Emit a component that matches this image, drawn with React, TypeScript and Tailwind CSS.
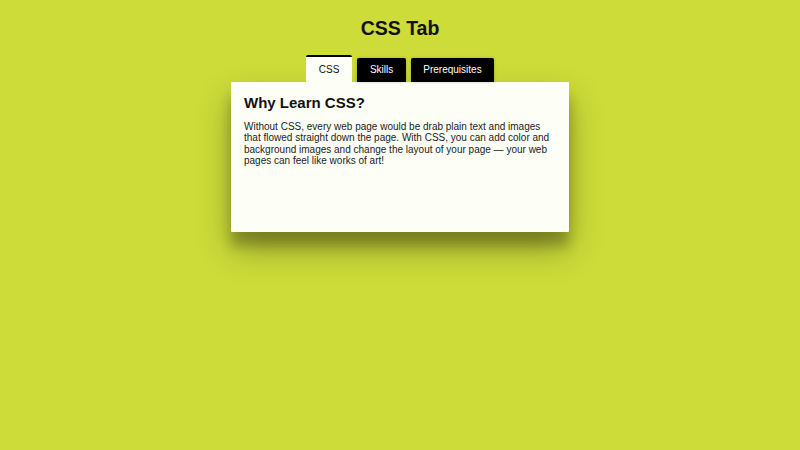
import { useState } from "react"

const TABS = [
  {
    id: "css",
    label: "CSS",
    title: "Why Learn CSS?",
    body: "Without CSS, every web page would be drab plain text and images that flowed straight down the page. With CSS, you can add color and background images and change the layout of your page — your web pages can feel like works of art!",
  },
  {
    id: "skills",
    label: "Skills",
    title: "What You'll Learn",
    body: "Selectors, the box model, positioning, flexbox, grid, colors, fonts and responsive design.",
  },
  {
    id: "prereq",
    label: "Prerequisites",
    title: "Before You Start",
    body: "A basic understanding of HTML and how a web page is put together.",
  },
]

export default function App() {
  const [active, setActive] = useState("css")
  const tab = TABS.find((t) => t.id === active) ?? TABS[0]

  return (
    <div className="min-h-screen bg-[#cddc39] font-['Liberation_Sans',Arial,sans-serif] text-[#111]">
      <h1 className="pt-[17px] text-center text-[19.5px] font-bold leading-[22px]">CSS Tab</h1>

      <div className="relative z-10 mt-[16px] flex items-end justify-center gap-[5px]">
        {TABS.map((t) =>
          t.id === active ? (
            <button
              key={t.id}
              onClick={() => setActive(t.id)}
              className="h-[27px] rounded-t-[2px] border-t-2 border-black bg-[#fdfff6] px-[13px] text-[10px] leading-none text-[#111]"
            >
              {t.label}
            </button>
          ) : (
            <button
              key={t.id}
              onClick={() => setActive(t.id)}
              className="h-[24px] rounded-t-[2px] bg-black px-[12.5px] text-[10px] leading-none text-white shadow-[0_0_3px_rgba(0,0,0,0.25)]"
            >
              {t.label}
            </button>
          )
        )}
      </div>

      <div className="mx-auto h-[150px] w-[338px] rounded-[1px] bg-[#fdfff6] px-[13px] pt-[12px] shadow-[0_17px_34px_rgba(0,0,0,0.3),0_14px_12px_rgba(0,0,0,0.22)]">
        <h2 className="text-[15px] font-bold leading-[17px]">{tab.title}</h2>
        <p className="mt-[10px] text-[10px] leading-[11.4px] text-[#1a1a1a]">{tab.body}</p>
      </div>
    </div>
  )
}
